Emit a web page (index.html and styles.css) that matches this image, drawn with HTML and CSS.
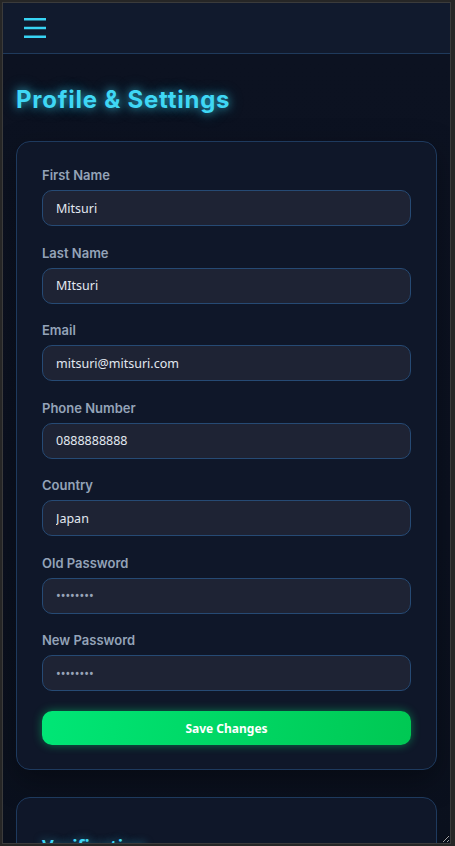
FILE: index.html
```html
<!DOCTYPE html>
<html lang="en">
<head>
<meta charset="utf-8">
<title>Profile &amp; Settings</title>
<link rel="stylesheet" href="styles.css">
</head>
<body>
<div class="frame">
  <header class="topbar">
    <button class="menu-btn" aria-label="Menu">
      <svg width="22" height="20" viewBox="0 0 22 20"><g stroke="#38d4f4" stroke-width="2.5"><line x1="0" y1="1.25" x2="22" y2="1.25"/><line x1="0" y1="10" x2="22" y2="10"/><line x1="0" y1="18.75" x2="22" y2="18.75"/></g></svg>
    </button>
  </header>
  <main class="main">
    <h1 class="page-title">Profile &amp; Settings</h1>
    <section class="card">
      <form class="form">
        <div class="field">
          <label class="label">First Name</label>
          <input class="input" type="text" value="Mitsuri">
        </div>
        <div class="field">
          <label class="label">Last Name</label>
          <input class="input" type="text" value="MItsuri">
        </div>
        <div class="field">
          <label class="label">Email</label>
          <input class="input" type="text" value="mitsuri@mitsuri.com">
        </div>
        <div class="field">
          <label class="label">Phone Number</label>
          <input class="input" type="text" value="0888888888">
        </div>
        <div class="field">
          <label class="label">Country</label>
          <input class="input" type="text" value="Japan">
        </div>
        <div class="field">
          <label class="label">Old Password</label>
          <input class="input" type="password" placeholder="••••••••">
        </div>
        <div class="field">
          <label class="label">New Password</label>
          <input class="input" type="password" placeholder="••••••••">
        </div>
        <button type="button" class="save-btn">Save Changes</button>
      </form>
    </section>
    <section class="card card-verify">
      <h2 class="card-title">Verification</h2>
    </section>
  </main>
</div>
</body>
</html>
```

FILE: styles.css
```css
* { box-sizing: border-box; }
html, body { margin: 0; padding: 0; }
body {
  background: #262626;
  width: 455px;
  height: 846px;
  overflow: hidden;
}
.frame {
  margin: 2px 4px 2px 2px;
  width: 449px;
  height: 842px;
  border: 1px solid #3b3b3b;
  overflow: hidden;
  resize: both;
  display: flex;
  flex-direction: column;
  background: #0b111e;
}
.topbar {
  flex: none;
  height: 51px;
  background: #111a2d;
  border-bottom: 1px solid #1f3a5c;
  display: flex;
  align-items: center;
  padding-left: 21px;
}
.menu-btn {
  background: none;
  border: 0;
  padding: 0;
  width: 22px;
  height: 20px;
  display: block;
}
.menu-btn svg { display: block; }
.main {
  flex: 1;
  overflow: hidden;
  padding: 31px 13px 0;
  background: linear-gradient(180deg, #0c1221 0%, #0b1120 60%, #0a101d 100%);
}
.page-title {
  margin: 0 0 27px;
  font-family: Inter, "Noto Sans", sans-serif;
  font-weight: 700;
  font-size: 24px;
  letter-spacing: 0.75px;
  line-height: 29px;
  color: #3fd7f5;
  text-shadow: 0 0 8px rgba(56, 212, 244, 0.65), 0 0 16px rgba(56, 212, 244, 0.35);
}
.card {
  background: #0f1729;
  border: 1px solid #1e3a5e;
  border-radius: 14px;
  padding: 24px 25px;
  box-shadow: 0 10px 30px rgba(0, 0, 0, 0.35);
}
.form {
  display: flex;
  flex-direction: column;
  gap: 17.5px;
  margin: 0;
}
.field {
  display: flex;
  flex-direction: column;
}
.label {
  font-family: Inter, "Noto Sans", sans-serif;
  font-weight: 600;
  font-size: 13px;
  line-height: 18px;
  color: #94a3b8;
  margin-bottom: 6px;
}
.input {
  height: 36px;
  width: 100%;
  background: #1e2334;
  border: 1px solid #264a74;
  border-radius: 10px;
  padding: 0 13px;
  font-family: "Noto Sans", sans-serif;
  font-size: 12.5px;
  color: #e2e8f0;
  outline: none;
}
.input::placeholder {
  color: #98a4b8;
  letter-spacing: 0;
}
.save-btn {
  margin-top: 2.5px;
  height: 34px;
  width: 100%;
  border: 0;
  border-radius: 10px;
  background: linear-gradient(100deg, #00e676 0%, #00c853 100%);
  box-shadow: 0 0 10px rgba(0, 230, 118, 0.45);
  color: #ffffff;
  font-family: "Noto Sans", sans-serif;
  font-weight: 700;
  font-size: 12px;
}
.card-verify {
  margin-top: 27px;
  padding-top: 36px;
  box-shadow: none;
}
.card-title {
  margin: 0;
  font-family: "Noto Sans", sans-serif;
  font-weight: 700;
  font-size: 18px;
  line-height: 24px;
  color: #3fd7f5;
  text-shadow: 0 0 8px rgba(56, 212, 244, 0.5);
}
```
